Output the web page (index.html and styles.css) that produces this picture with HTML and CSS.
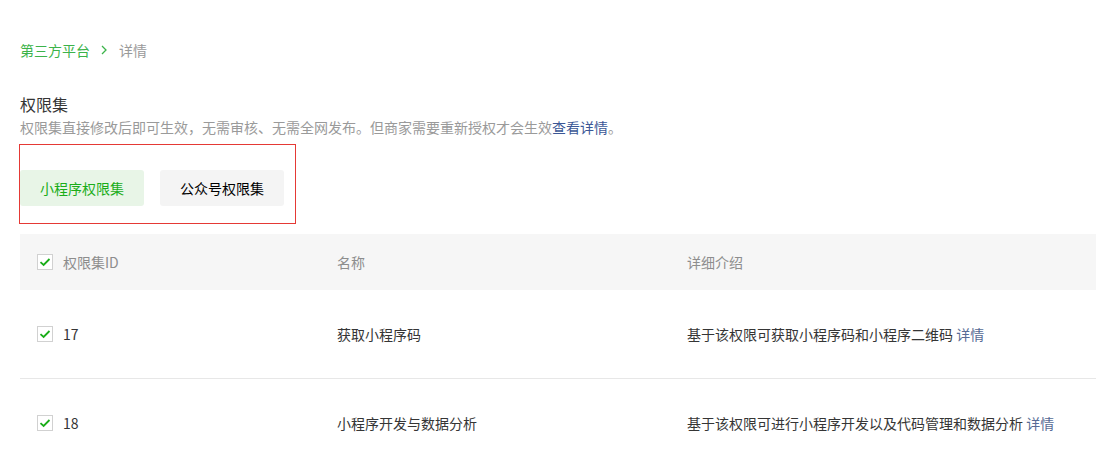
FILE: index.html
```html
<!DOCTYPE html>
<html lang="zh-CN">
<head>
    <meta charset="UTF-8">
    <meta name="viewport" content="width=device-width, initial-scale=1.0">
    <title>详情 - 第三方平台</title>
    <link rel="stylesheet" href="styles.css">
</head>
<body>
    <div class="page">
        <div class="breadcrumb">
            <a class="crumb-link" href="#">第三方平台</a>
            <span class="crumb-sep"><svg width="6" height="10" viewBox="0 0 6 10"><path d="M1 1 L5 5 L1 9" fill="none" stroke="#3cb34a" stroke-width="1.3"/></svg></span>
            <span class="crumb-current">详情</span>
        </div>

        <h2 class="title">权限集</h2>
        <p class="desc">权限集直接修改后即可生效，无需审核、无需全网发布。但商家需要重新授权才会生效<a href="#" class="desc-link">查看详情</a>。</p>

        <div class="tabs-box">
            <button class="tab tab-active">小程序权限集</button>
            <button class="tab">公众号权限集</button>
        </div>

        <div class="table">
            <div class="row row-head">
                <div class="cell cell-id">
                    <span class="checkbox"><svg width="12" height="10" viewBox="0 0 12 10"><path d="M1.5 5.2 L4.6 8 L10.5 2" fill="none" stroke="#1aad19" stroke-width="1.8"/></svg></span>
                    权限集ID
                </div>
                <div class="cell cell-name">名称</div>
                <div class="cell cell-detail">详细介绍</div>
            </div>
            <div class="row">
                <div class="cell cell-id">
                    <span class="checkbox"><svg width="12" height="10" viewBox="0 0 12 10"><path d="M1.5 5.2 L4.6 8 L10.5 2" fill="none" stroke="#1aad19" stroke-width="1.8"/></svg></span>
                    17
                </div>
                <div class="cell cell-name">获取小程序码</div>
                <div class="cell cell-detail">基于该权限可获取小程序码和小程序二维码 <a href="#" class="more">详情</a></div>
            </div>
            <div class="row">
                <div class="cell cell-id">
                    <span class="checkbox"><svg width="12" height="10" viewBox="0 0 12 10"><path d="M1.5 5.2 L4.6 8 L10.5 2" fill="none" stroke="#1aad19" stroke-width="1.8"/></svg></span>
                    18
                </div>
                <div class="cell cell-name">小程序开发与数据分析</div>
                <div class="cell cell-detail">基于该权限可进行小程序开发以及代码管理和数据分析 <a href="#" class="more">详情</a></div>
            </div>
        </div>
    </div>
</body>
</html>
```
FILE: styles.css
```css
body {
    margin: 0;
    padding: 0;
    font-family: "Microsoft YaHei", "Noto Sans CJK SC", "Noto Sans", sans-serif;
    font-size: 14px;
    color: #353535;
    background: #fff;
    overflow: hidden;
}
a {
    text-decoration: none;
}
.page {
    padding: 40px 0 0 20px;
}
.breadcrumb {
    line-height: 20px;
    display: flex;
    align-items: center;
}
.crumb-link {
    color: #3cb34a;
}
.crumb-sep {
    display: flex;
    margin: 0 12px 0 11px;
}
.crumb-current {
    color: #9a9a9a;
}
.title {
    margin: 32px 0 0;
    font-size: 16px;
    font-weight: normal;
    line-height: 24px;
    color: #353535;
}
.desc {
    margin: 1px 0 0;
    line-height: 20px;
    color: #9a9a9a;
}
.desc-link {
    color: #3b5796;
}
.tabs-box {
    display: flex;
    gap: 16px;
    width: fit-content;
    margin: 7px 0 0 -1px;
    padding: 25px 11px 17px 0;
    border: 1px solid #e53935;
}
.tab {
    width: 124px;
    height: 36px;
    border: none;
    border-radius: 3px;
    background-color: #f4f4f4;
    color: #000;
    font-family: inherit;
    font-size: 14px;
    padding: 0;
    cursor: pointer;
}
.tab-active {
    background-color: #e8f5e7;
    color: #1aad19;
}
.table {
    margin-top: 10px;
}
.row {
    display: flex;
    align-items: center;
    height: 88px;
    border-bottom: 1px solid #e7e7e7;
}
.row-head {
    height: 56px;
    background-color: #f6f6f6;
    color: #8d8d8d;
    border-bottom: none;
}
.cell {
    display: flex;
    align-items: center;
}
.cell-id {
    width: 300px;
    padding-left: 17px;
}
.cell-name {
    width: 350px;
}
.cell-detail {
    flex: 1;
    white-space: pre;
}
.checkbox {
    width: 14px;
    height: 14px;
    border: 1px solid #d1d1d1;
    background: #fff;
    margin-right: 10px;
    display: flex;
    align-items: center;
    justify-content: center;
}
.more {
    color: #576b95;
}
```
